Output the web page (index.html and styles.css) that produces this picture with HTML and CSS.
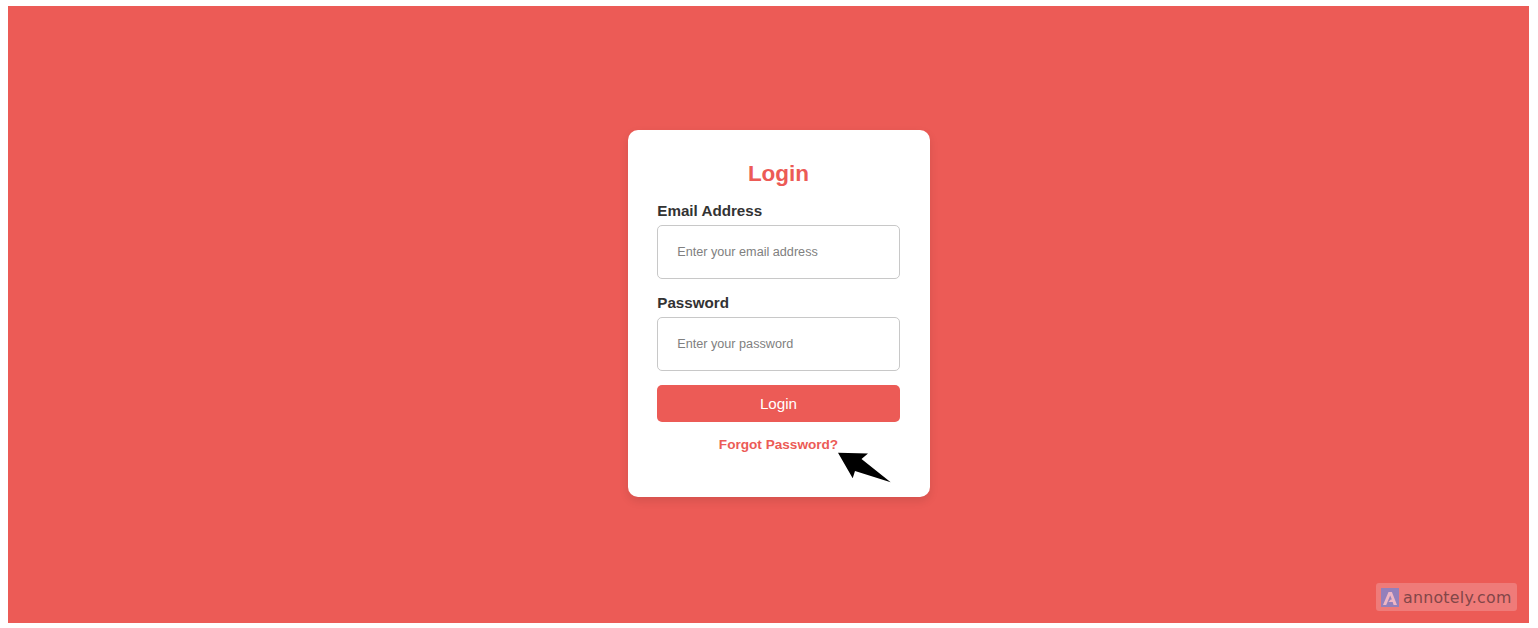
FILE: index.html
```html
<!DOCTYPE html>
<html lang="en">
<head>
<meta charset="utf-8">
<title>Login</title>
<link rel="stylesheet" href="styles.css">
</head>
<body>
<main class="stage">
  <form class="card">
    <h1 class="title">Login</h1>
    <label class="label" for="email">Email Address</label>
    <input class="field" id="email" type="email" placeholder="Enter your email address">
    <label class="label label-next" for="password">Password</label>
    <input class="field" id="password" type="password" placeholder="Enter your password">
    <button class="submit" type="button">Login</button>
    <a class="forgot" href="#">Forgot Password?</a>
    <svg class="arrow" width="54" height="32" viewBox="0 0 54 32" aria-hidden="true">
      <path d="M0 0.7L30 1.5L23.5 7L52.7 30.3L17 19L14.7 26.3Z"/>
    </svg>
  </form>
  <div class="badge">
    <svg class="badge-logo" width="18" height="19" viewBox="0 0 18 19" aria-hidden="true">
      <rect width="18" height="19" fill="#9480bb"/>
      <path d="M2 17L7.5 4h3.4L16 17h-3.4l-.9-3H7.4l2.4-2.6h1.1L9.2 7.5 5.2 17Z" fill="#efb6c4"/>
    </svg>
    <span class="badge-text">annotely.com</span>
  </div>
</main>
</body>
</html>
```
FILE: styles.css
```css
html, body {
  height: 100%;
}
body {
  margin: 0;
  padding: 6px 9px 5px 8px;
  box-sizing: border-box;
  background: #fff;
  font-family: "Liberation Sans", Arial, sans-serif;
}
.stage {
  position: relative;
  height: 100%;
  background: #ec5b56;
  display: flex;
  align-items: center;
  justify-content: center;
}
.card {
  position: relative;
  box-sizing: border-box;
  width: 302.5px;
  height: 367px;
  margin: -3px 0 0 21px;
  padding: 31px 30.5px 0 29.5px;
  background: #fff;
  border-radius: 10px;
  box-shadow: 0 4px 10px rgba(0, 0, 0, 0.1);
  display: flex;
  flex-direction: column;
}
.title {
  margin: 0 0 15.5px;
  font-size: 22.5px;
  line-height: 26px;
  font-weight: 700;
  text-align: center;
  color: #ec5b56;
}
.label {
  font-size: 15.2px;
  line-height: 17px;
  font-weight: 700;
  color: #333;
  margin-bottom: 5.5px;
}
.label-next {
  margin-top: 15.5px;
}
.field {
  box-sizing: border-box;
  width: 100%;
  height: 54px;
  padding: 0 19px;
  border: 1px solid #c8c8c8;
  border-radius: 5px;
  background: #fff;
  font: 12.65px "Liberation Sans", Arial, sans-serif;
  outline: none;
}
.field::placeholder {
  color: #808080;
}
.submit {
  height: 37px;
  margin-top: 14.5px;
  border: 0;
  border-radius: 5px;
  background: #ec5b56;
  color: #fff;
  font: 15.2px "Liberation Sans", Arial, sans-serif;
}
.forgot {
  margin-top: 15px;
  font-size: 13.6px;
  line-height: 16px;
  font-weight: 700;
  text-align: center;
  text-decoration: none;
  color: #ec5b56;
}
.arrow {
  position: absolute;
  left: 210px;
  top: 322px;
}
.badge {
  position: absolute;
  right: 12px;
  bottom: 12px;
  width: 141px;
  height: 28px;
  box-sizing: border-box;
  padding-left: 5px;
  border-radius: 3px;
  background: #ef7b79;
  display: flex;
  align-items: center;
  gap: 4px;
}
.badge-text {
  font-family: "DejaVu Sans", sans-serif;
  font-size: 15.8px;
  letter-spacing: 0.25px;
  color: #824648;
}
```
